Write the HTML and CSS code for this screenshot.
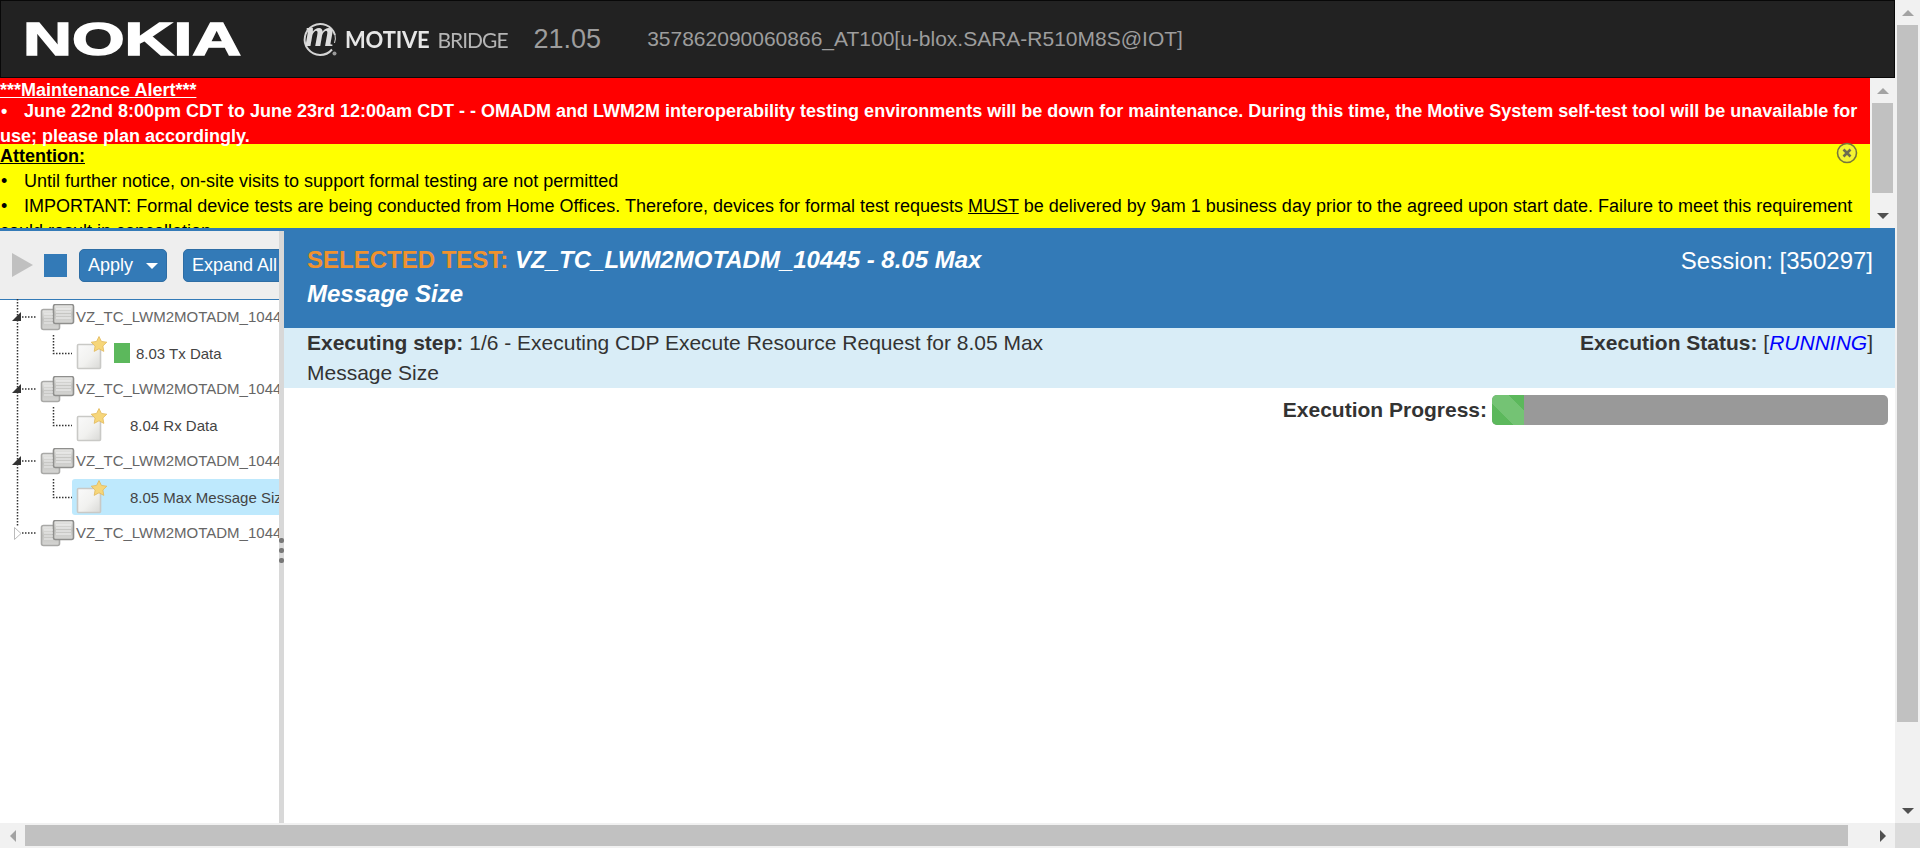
FILE: index.html
```html
<!DOCTYPE html>
<html lang="en">
<head>
  <meta charset="utf-8">
  <title>Motive Bridge</title>
  <link rel="stylesheet" href="styles.css">
</head>
<body>
  <svg class="defs" width="0" height="0">
    <defs>
      <linearGradient id="sheet" x1="0" y1="0" x2="1" y2="1">
        <stop offset="0" stop-color="#fafafa"/>
        <stop offset="0.55" stop-color="#f1f1ef"/>
        <stop offset="1" stop-color="#d9d9d6"/>
      </linearGradient>
      <linearGradient id="stack" x1="0" y1="0" x2="0" y2="1">
        <stop offset="0" stop-color="#e9e9e7"/>
        <stop offset="0.5" stop-color="#c4c4c1"/>
        <stop offset="1" stop-color="#d6d6d4"/>
      </linearGradient>
      <symbol id="docs" viewBox="0 0 36 28" width="36" height="28">
        <rect x="1.5" y="5.5" width="18" height="20" rx="2" fill="url(#stack)" stroke="#a9a9a7" stroke-width="1.6"/>
        <rect x="13.5" y="0.5" width="20" height="19" rx="2" fill="url(#stack)" stroke="#8f8f8d" stroke-width="1.6"/>
        <path d="M16 5h15M16 8h15M16 11h15M16 14h15" stroke="#f4f4f4" stroke-width="1"/>
        <path d="M4 10h9M4 13h9M4 16h9M4 19h9" stroke="#ececec" stroke-width="1"/>
      </symbol>
      <symbol id="test" viewBox="0 0 36 36" width="36" height="36">
        <rect x="5.5" y="9.5" width="23" height="24" rx="1" fill="url(#sheet)" stroke="#c9c9c6" stroke-width="1.6"/>
        <polygon points="27,1.5 29.4,6.4 34.8,7.2 30.9,11 31.8,16.4 27,13.8 22.2,16.4 23.1,11 19.2,7.2 24.6,6.4" fill="#f6d67a" stroke="#e2b95a" stroke-width="0.8"/>
      </symbol>
    </defs>
  </svg>

  <div class="page">
    <div class="content">
      <header class="topbar">
        <div class="nokia"><span class="nokia-text">NOKIA</span></div>
        <div class="motive">
          <svg class="motive-mark" width="36" height="36" viewBox="0 0 36 36">
            <path d="M30 28.5A15.5 15.5 0 1 1 33 14" fill="none" stroke="#d4d4d4" stroke-width="2"/>
            <path d="M33 14q1 4 -0.5 8" fill="none" stroke="#d4d4d4" stroke-width="1"/>
            <circle cx="32.5" cy="32.5" r="2" fill="#999"/>
            <text x="17.5" y="25" class="motive-m">m</text>
          </svg>
          <span class="motive-name">MOTIVE</span>
          <span class="motive-bridge">BRIDGE</span>
        </div>
        <span class="version">21.05</span>
        <span class="device">357862090060866_AT100[u-blox.SARA-R510M8S@IOT]</span>
      </header>

      <section class="alerts">
        <div class="alert-body">
          <div class="alert-red">
            <div class="alert-title"><u>***Maintenance Alert***</u></div>
            <div class="alert-item"><span class="bullet">•</span>June 22nd 8:00pm CDT to June 23rd 12:00am CDT - - OMADM and LWM2M interoperability testing environments will be down for maintenance. During this time, the Motive System self-test tool will be unavailable for use; please plan accordingly.</div>
          </div>
          <div class="alert-yellow">
            <div class="alert-title"><u>Attention:</u></div>
            <div class="alert-item"><span class="bullet">•</span>Until further notice, on-site visits to support formal testing are not permitted</div>
            <div class="alert-item"><span class="bullet">•</span>IMPORTANT: Formal device tests are being conducted from Home Offices. Therefore, devices for formal test requests <u>MUST</u> be delivered by 9am 1 business day prior to the agreed upon start date. Failure to meet this requirement could result in cancellation.</div>
          </div>
          <svg class="alert-close" width="22" height="22" viewBox="0 0 22 22">
            <circle cx="11" cy="11" r="9.5" fill="#f4f432" stroke="#77773a" stroke-width="1.6"/>
            <path d="M7.5 7.5l7 7M14.5 7.5l-7 7" stroke="#6d6d50" stroke-width="2.6"/>
          </svg>
        </div>
        <div class="vbar vbar-alert">
          <div class="arrow-cell"><i class="tri tri-up tri-light"></i></div>
          <div class="thumb thumb-alert"></div>
          <div class="arrow-cell arrow-end"><i class="tri tri-down"></i></div>
        </div>
      </section>

      <main class="main">
        <aside class="side">
          <div class="toolbar">
            <i class="play"></i>
            <i class="stop"></i>
            <button class="btn btn-apply">Apply <i class="caret"></i></button>
            <button class="btn btn-expand">Expand All</button>
          </div>
          <ul class="tree">
            <li class="tree-row">
              <svg class="gutter" width="76" height="36"><path class="vline" d="M17.5 0V36"/><path class="hline" d="M22 18H36"/><polygon points="12,22 21,22 21,13" fill="#333"/><use href="#docs" x="40" y="5"/></svg>
              <span class="suite">VZ_TC_LWM2MOTADM_10443</span>
            </li>
            <li class="tree-row">
              <svg class="gutter" width="72" height="36"><path class="vline" d="M17.5 0V36"/><path class="hline" d="M53.5 0V18.5H72"/></svg>
              <div class="node"><svg class="node-icon" width="36" height="36"><use href="#test"/></svg><i class="status"></i><span class="case">8.03 Tx Data</span></div>
            </li>
            <li class="tree-row">
              <svg class="gutter" width="76" height="36"><path class="vline" d="M17.5 0V36"/><path class="hline" d="M22 18H36"/><polygon points="12,22 21,22 21,13" fill="#333"/><use href="#docs" x="40" y="5"/></svg>
              <span class="suite">VZ_TC_LWM2MOTADM_10444</span>
            </li>
            <li class="tree-row">
              <svg class="gutter" width="72" height="36"><path class="vline" d="M17.5 0V36"/><path class="hline" d="M53.5 0V18.5H72"/></svg>
              <div class="node"><svg class="node-icon" width="36" height="36"><use href="#test"/></svg><span class="case case-plain">8.04 Rx Data</span></div>
            </li>
            <li class="tree-row">
              <svg class="gutter" width="76" height="36"><path class="vline" d="M17.5 0V36"/><path class="hline" d="M22 18H36"/><polygon points="12,22 21,22 21,13" fill="#333"/><use href="#docs" x="40" y="5"/></svg>
              <span class="suite">VZ_TC_LWM2MOTADM_10445</span>
            </li>
            <li class="tree-row">
              <svg class="gutter" width="72" height="36"><path class="vline" d="M17.5 0V36"/><path class="hline" d="M53.5 0V18.5H72"/></svg>
              <div class="node node-selected"><svg class="node-icon" width="36" height="36"><use href="#test"/></svg><span class="case case-plain">8.05 Max Message Size</span></div>
            </li>
            <li class="tree-row">
              <svg class="gutter" width="76" height="36"><path class="vline" d="M17.5 0V12"/><path class="hline" d="M22 18H36"/><polygon points="14.5,12.5 21,18.5 14.5,24.5" fill="#fff" stroke="#bbb"/><use href="#docs" x="40" y="5"/></svg>
              <span class="suite">VZ_TC_LWM2MOTADM_10446</span>
            </li>
          </ul>
        </aside>

        <div class="splitter"><i></i><i></i><i></i></div>

        <div class="detail">
          <div class="test-head">
            <div class="test-title"><span class="selected-label">SELECTED TEST:</span> <em>VZ_TC_LWM2MOTADM_10445 - 8.05 Max<br>Message Size</em></div>
            <div class="session">Session: [350297]</div>
          </div>
          <div class="test-step">
            <div class="step-text"><b>Executing step:</b> 1/6 - Executing CDP Execute Resource Request for 8.05 Max<br>Message Size</div>
            <div class="step-status"><b>Execution Status:</b> [<em class="running">RUNNING</em>]</div>
          </div>
          <div class="test-progress">
            <b>Execution Progress:</b>
            <div class="progress"><div class="progress-bar" style="width: 8%"></div></div>
          </div>
        </div>
      </main>
    </div>

    <div class="vbar vbar-page">
      <div class="arrow-cell"><i class="tri tri-up tri-light"></i></div>
      <div class="thumb thumb-page"></div>
      <div class="arrow-cell arrow-end"><i class="tri tri-down"></i></div>
    </div>
    <div class="hbar">
      <div class="arrow-cell"><i class="tri tri-left"></i></div>
      <div class="thumb thumb-wide"></div>
      <div class="arrow-cell arrow-end"><i class="tri tri-right"></i></div>
    </div>
    <div class="corner"></div>
  </div>
</body>
</html>
```

FILE: styles.css
```css
html, body {
  margin: 0;
  height: 100%;
  overflow: hidden;
}

body {
  font-family: "Liberation Sans", Arial, sans-serif;
  font-size: 16px;
  color: #333;
  background-color: #fff;
}

.defs {
  position: absolute;
}

.page {
  display: grid;
  grid-template-columns: 1fr 25px;
  grid-template-rows: 1fr 25px;
  height: 100vh;
}

.content {
  display: flex;
  flex-direction: column;
  min-width: 0;
  min-height: 0;
  overflow: hidden;
}

/* top bar */
.topbar {
  display: flex;
  align-items: center;
  flex: none;
  box-sizing: border-box;
  height: 78px;
  padding-left: 22px;
  background-color: #222;
  border: 1px solid #080808;
}

.nokia {
  width: 214px;
  filter: blur(0.5px);
}

.nokia-text {
  display: inline-block;
  font-size: 47px;
  font-weight: bold;
  line-height: 40px;
  color: #fff;
  -webkit-text-stroke: 1.5px #fff;
  transform: scaleX(1.44);
  transform-origin: left center;
}

.motive {
  display: flex;
  align-items: center;
  margin-left: 65px;
  filter: blur(0.3px);
}

.motive-mark {
  margin-right: 7px;
}

.motive-m {
  font-family: "Liberation Serif", serif;
  font-size: 38px;
  font-weight: bold;
  font-style: italic;
  text-anchor: middle;
  fill: #ddd;
}

.motive-name {
  font-family: Lato, sans-serif;
  font-size: 22px;
  font-weight: bold;
  letter-spacing: -0.2px;
  color: #e6e6e6;
}

.motive-bridge {
  margin-left: 8px;
  font-family: Lato, sans-serif;
  font-size: 21px;
  letter-spacing: -1px;
  color: #b5b5b5;
}

.version {
  margin-left: 26px;
  font-size: 27px;
  color: #9d9d9d;
}

.device {
  margin-left: 46px;
  font-size: 21px;
  color: #9d9d9d;
}

/* alert banners */
.alerts {
  display: flex;
  flex: none;
  height: 150px;
  overflow: hidden;
}

.alert-body {
  position: relative;
  flex: 1;
  min-width: 0;
  font-size: 18px;
  line-height: 25px;
  background-color: #ff0;
}

.alert-red {
  height: 66px;
  font-weight: bold;
  color: #fff;
  background-color: #f00;
}

.alert-red .alert-item {
  margin-top: -4px;
}

.alert-yellow {
  color: #000;
}

.alert-title {
  font-weight: bold;
}

.bullet {
  display: inline-block;
  width: 24px;
  padding-left: 1px;
  box-sizing: border-box;
}

.alert-close {
  position: absolute;
  top: 64px;
  right: 12px;
}

/* scrollbars */
.vbar {
  display: flex;
  flex-direction: column;
  align-items: center;
  background-color: #f1f1f1;
}

.vbar-alert {
  flex: none;
  width: 25px;
}

.hbar {
  display: flex;
  align-items: center;
  background-color: #f1f1f1;
}

.arrow-cell {
  display: flex;
  align-items: center;
  justify-content: center;
  flex: none;
  width: 25px;
  height: 25px;
}

.arrow-end {
  margin-top: auto;
  margin-left: auto;
}

.thumb {
  background-color: #c1c1c1;
}

.thumb-alert {
  width: 21px;
  height: 90px;
}

.thumb-page {
  width: 21px;
  height: 697px;
}

.thumb-wide {
  width: 1823px;
  height: 21px;
}

.corner {
  background-color: #dcdcdc;
}

.tri {
  width: 0;
  height: 0;
  border-style: solid;
  border-color: transparent;
}

.tri-up {
  border-width: 0 6px 6px;
  border-bottom-color: #505050;
}

.tri-light {
  border-bottom-color: #a3a3a3;
}

.tri-down {
  border-width: 6px 6px 0;
  border-top-color: #505050;
}

.tri-left {
  border-width: 6px 6px 6px 0;
  border-right-color: #a3a3a3;
}

.tri-right {
  border-width: 6px 0 6px 6px;
  border-left-color: #505050;
}

/* main area */
.main {
  display: flex;
  flex: 1;
  min-height: 0;
  border-top: 3px solid #337ab7;
}

.side {
  flex: none;
  width: 279px;
  overflow: hidden;
}

.toolbar {
  display: flex;
  align-items: center;
  box-sizing: border-box;
  height: 69px;
  padding-left: 12px;
  background-color: #eee;
  border-bottom: 1px solid #337ab7;
}

.play {
  flex: none;
  width: 0;
  height: 0;
  border-style: solid;
  border-width: 12px 0 12px 21px;
  border-color: transparent transparent transparent #c0c0c0;
}

.stop {
  flex: none;
  width: 23px;
  height: 23px;
  margin-left: 11px;
  background-color: #337ab7;
}

.btn {
  flex: none;
  box-sizing: border-box;
  height: 33px;
  padding: 0 8px;
  font-family: inherit;
  font-size: 18px;
  color: #fff;
  white-space: nowrap;
  background-color: #337ab7;
  border: 1px solid #2e6da4;
  border-radius: 5px;
}

.btn-apply {
  width: 88px;
  margin-left: 12px;
  text-align: left;
}

.btn-expand {
  width: 110px;
  margin-left: 16px;
  text-align: left;
}

.caret {
  display: inline-block;
  margin-left: 8px;
  vertical-align: middle;
  border-style: solid;
  border-width: 6px 6px 0;
  border-color: #fff transparent transparent;
}

.tree {
  margin: -1px 0 0;
  padding: 0;
  list-style: none;
}

.tree-row {
  display: flex;
  align-items: center;
  height: 36px;
  font-size: 15px;
  white-space: nowrap;
}

.gutter {
  flex: none;
}

.vline, .hline {
  fill: none;
  stroke: #333;
  stroke-width: 1.5;
  stroke-dasharray: 1.5 1.5;
}

.suite {
  margin-top: -1px;
  color: #666;
}

.node {
  display: flex;
  align-items: center;
  flex: 1;
  height: 36px;
  border-radius: 3px;
}

.node-selected {
  background-color: #bee9fd;
}

.node-icon {
  flex: none;
}

.status {
  flex: none;
  width: 16px;
  height: 20px;
  margin-left: 6px;
  background-color: #5cb85c;
}

.case {
  margin-left: 6px;
  color: #444;
}

.case-plain {
  margin-left: 22px;
}

.splitter {
  display: flex;
  flex-direction: column;
  align-items: center;
  gap: 5px;
  flex: none;
  box-sizing: border-box;
  width: 5px;
  padding-top: 307px;
  background-color: #d8d8d8;
}

.splitter i {
  width: 5px;
  height: 5px;
  border-radius: 2px;
  background-color: #777;
}

/* test details */
.detail {
  flex: 1;
  min-width: 0;
}

.test-head {
  display: flex;
  justify-content: space-between;
  box-sizing: border-box;
  height: 97px;
  padding: 12px 22px 0 23px;
  color: #fff;
  background-color: #337ab7;
}

.test-title {
  font-size: 24px;
  font-weight: bold;
  line-height: 34px;
}

.selected-label {
  color: #f0922e;
}

.session {
  font-size: 24px;
  line-height: 36px;
}

.test-step {
  display: flex;
  justify-content: space-between;
  box-sizing: border-box;
  height: 60px;
  padding: 0 22px 0 23px;
  font-size: 21px;
  line-height: 30px;
  background-color: #d9edf7;
}

.running {
  color: #00f;
}

.test-progress {
  display: flex;
  align-items: center;
  justify-content: flex-end;
  height: 30px;
  margin-top: 7px;
  padding-right: 7px;
  font-size: 21px;
}

.progress {
  width: 396px;
  height: 30px;
  margin-left: 5px;
  overflow: hidden;
  background-color: #999;
  border-radius: 5px;
}

.progress-bar {
  height: 100%;
  background-color: #5cb85c;
  background-image: linear-gradient(45deg, rgba(255, 255, 255, 0.15) 25%, transparent 25%, transparent 50%, rgba(255, 255, 255, 0.15) 50%, rgba(255, 255, 255, 0.15) 75%, transparent 75%, transparent);
  background-size: 50px 50px;
  background-position: 22px 100%;
}
```
